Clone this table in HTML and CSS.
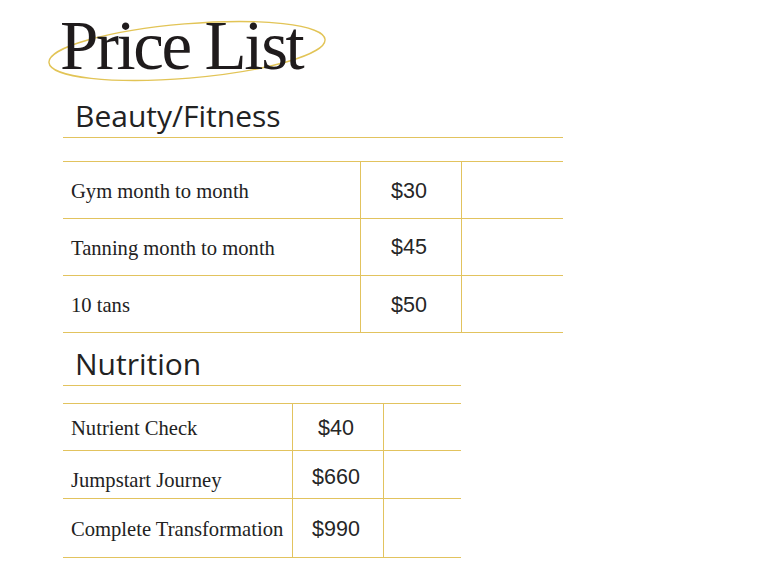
FILE: index.html
```html
<!DOCTYPE html>
<html lang="en">
<head>
<meta charset="utf-8">
<title>Price List</title>
<link rel="stylesheet" href="styles.css">
</head>
<body>
<div class="page">
  <svg class="ring" width="360" height="100" viewBox="0 0 360 100" aria-hidden="true">
    <ellipse cx="187" cy="51" rx="138.5" ry="27.2" transform="rotate(-4.8 187 51)" fill="none" stroke="#e2c456" stroke-width="1.4"/>
  </svg>
  <h1 class="title">Price List</h1>

  <section class="section beauty">
    <h2 class="heading">Beauty/Fitness</h2>
    <div class="table wide">
      <div class="row">
        <div class="cell name">Gym month to month</div>
        <div class="cell price">$30</div>
        <div class="cell blank"></div>
      </div>
      <div class="row">
        <div class="cell name">Tanning month to month</div>
        <div class="cell price up">$45</div>
        <div class="cell blank"></div>
      </div>
      <div class="row">
        <div class="cell name">10 tans</div>
        <div class="cell price">$50</div>
        <div class="cell blank"></div>
      </div>
    </div>
  </section>

  <section class="section nutrition">
    <h2 class="heading">Nutrition</h2>
    <div class="table narrow">
      <div class="row short">
        <div class="cell name">Nutrient Check</div>
        <div class="cell price">$40</div>
        <div class="cell blank"></div>
      </div>
      <div class="row mid">
        <div class="cell name low">Jumpstart Journey</div>
        <div class="cell price">$660</div>
        <div class="cell blank"></div>
      </div>
      <div class="row tall">
        <div class="cell name">Complete Transformation</div>
        <div class="cell price">$990</div>
        <div class="cell blank"></div>
      </div>
    </div>
  </section>
</div>
</body>
</html>
```

FILE: styles.css
```css
* { box-sizing: border-box; }

html, body {
  margin: 0;
  padding: 0;
  background: #ffffff;
}

.page {
  position: relative;
  width: 768px;
  height: 576px;
  padding: 6px 0 0 63px;
  overflow: hidden;
}

.ring {
  position: absolute;
  left: 0;
  top: 0;
  z-index: 0;
}

.title {
  position: relative;
  z-index: 1;
  margin: 0 0 0 -3px;
  font-family: "Liberation Serif", "Times New Roman", serif;
  font-weight: 400;
  font-size: 69px;
  line-height: 80px;
  letter-spacing: -2.4px;
  color: #1f1b1c;
}

.heading {
  margin: 0;
  padding: 0 0 1px 12px;
  font-family: "Open Sans", "Noto Sans", sans-serif;
  font-weight: 400;
  font-size: 30px;
  line-height: 40px;
  color: #222222;
  border-bottom: 1px solid #e2c35e;
}

.beauty { width: 500px; margin-top: 10px; }
.nutrition { width: 398px; margin-top: 11px; }

.beauty .table { margin-top: 23px; }
.nutrition .table { margin-top: 17px; }

.table {
  border-top: 1px solid #e2c35e;
}

.row {
  display: grid;
  height: 57px;
  border-bottom: 1px solid #e2c35e;
}

.wide .row { grid-template-columns: 297px 101px 102px; }
.narrow .row { grid-template-columns: 229px 91px 78px; }

.narrow .row.short { height: 47px; }
.narrow .row.mid { height: 48px; }
.narrow .row.tall { height: 59px; }

.cell {
  display: flex;
  align-items: center;
  padding-top: 2px;
}

.cell + .cell {
  border-left: 1px solid #e2c35e;
}

.name {
  padding-left: 8px;
  font-family: "Liberation Serif", "Times New Roman", serif;
  font-size: 20.6px;
  line-height: 24px;
  color: #222222;
  white-space: nowrap;
}

.name.low { padding-top: 10px; }

.price {
  justify-content: center;
  padding-right: 4px;
  font-family: "Liberation Sans", Arial, sans-serif;
  font-size: 21.5px;
  line-height: 24px;
  color: #262626;
}

.price.up { padding-top: 0; }
.narrow .row.mid .price { padding-top: 4px; }
```
